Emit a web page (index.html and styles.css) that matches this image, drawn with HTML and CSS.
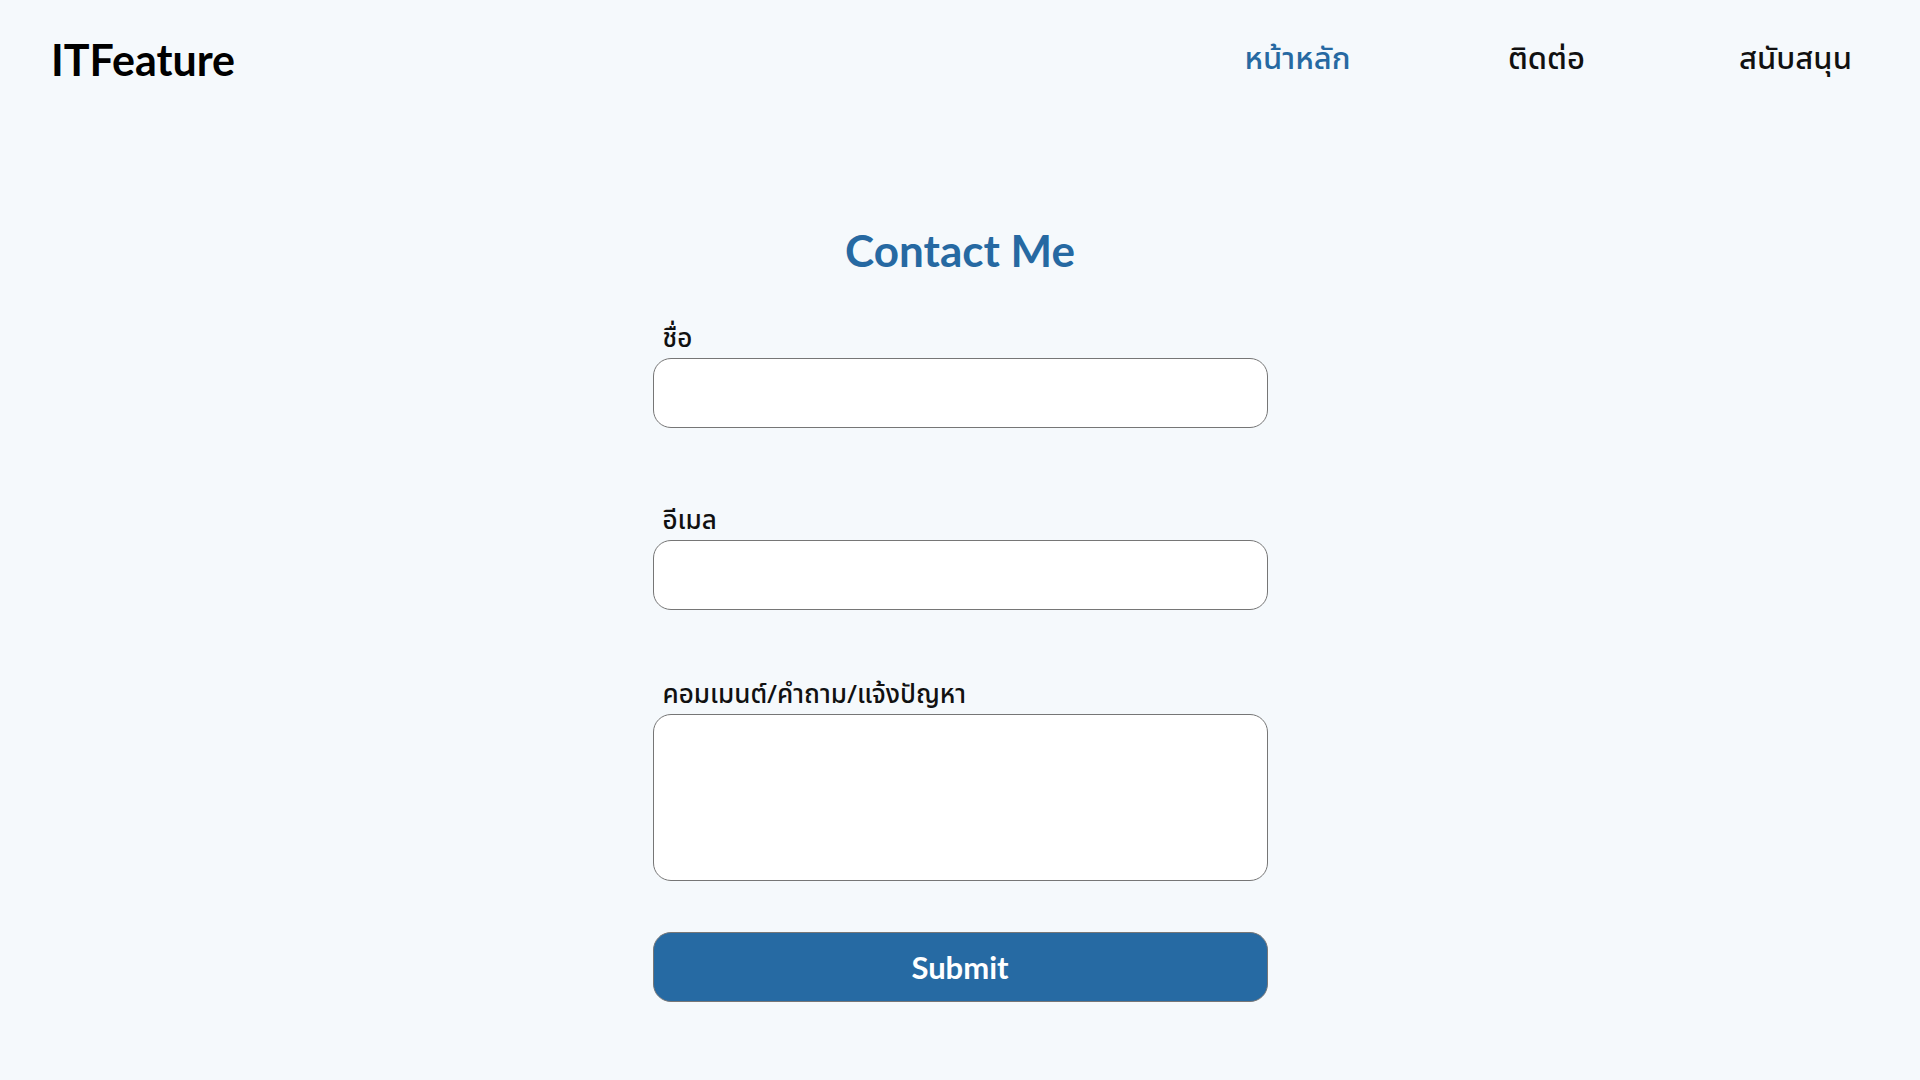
FILE: index.html
```html
<!DOCTYPE html>
<html lang="th">
<head>
<meta charset="utf-8">
<title>ITFeature - Contact</title>
<link rel="stylesheet" href="styles.css">
</head>
<body>
<header class="topbar">
  <div class="logo">ITFeature</div>
  <nav class="nav">
    <a class="nav-link active" href="#">หน้าหลัก</a>
    <a class="nav-link" href="#">ติดต่อ</a>
    <a class="nav-link" href="#">สนับสนุน</a>
  </nav>
</header>
<main class="page">
  <form class="contact">
    <h1 class="title">Contact Me</h1>
    <label class="field">
      <span class="label">ชื่อ</span>
      <input class="input" type="text">
    </label>
    <label class="field">
      <span class="label">อีเมล</span>
      <input class="input" type="email">
    </label>
    <label class="field">
      <span class="label">คอมเมนต์/คำถาม/แจ้งปัญหา</span>
      <textarea class="input area"></textarea>
    </label>
    <button class="submit" type="button">Submit</button>
  </form>
</main>
</body>
</html>
```
FILE: styles.css
```css
* { box-sizing: border-box; }
html, body { margin: 0; padding: 0; }
body {
  background: #f5f9fc;
  font-family: "Noto Sans", "Noto Sans Thai", "Lato", sans-serif;
  color: #111;
  width: 1920px;
  height: 1080px;
  overflow: hidden;
}
.topbar {
  display: flex;
  align-items: center;
  justify-content: space-between;
  height: 118px;
  padding: 0 0 0 51px;
}
.logo {
  font-family: "Lato", "Noto Sans", sans-serif;
  font-weight: 700;
  font-size: 43px;
  color: #000;
}
.nav {
  display: flex;
}
.nav-link {
  width: 249px;
  text-align: center;
  font-size: 31px;
  font-weight: 500;
  color: #111;
  text-decoration: none;
}
.nav-link.active { color: #2669a2; }
.page {
  display: flex;
  justify-content: center;
  padding-top: 106px;
}
.contact {
  width: 615px;
  display: flex;
  flex-direction: column;
}
.title {
  margin: 0 0 44px;
  text-align: center;
  font-family: "Lato", "Noto Sans", sans-serif;
  font-weight: 700;
  font-size: 44px;
  color: #2669a2;
  line-height: 52px;
}
.field {
  display: flex;
  flex-direction: column;
  margin-bottom: 74px;
}
.field:nth-of-type(2) { margin-bottom: 66px; }
.field:nth-of-type(3) { margin-bottom: 51px; }
.label {
  font-size: 26px;
  font-weight: 500;
  line-height: 34px;
  padding-left: 10px;
  margin-bottom: 4px;
  color: #111;
}
.input {
  width: 615px;
  height: 70px;
  border: 1px solid #767676;
  border-radius: 18px;
  background: #fff;
  font: inherit;
  resize: none;
}
.area { height: 167px; }
.submit {
  width: 615px;
  height: 70px;
  border: 1px solid #777;
  border-radius: 18px;
  background: #266aa3;
  color: #fff;
  font-family: "Lato", "Noto Sans", sans-serif;
  font-weight: 700;
  font-size: 31px;
}
```
